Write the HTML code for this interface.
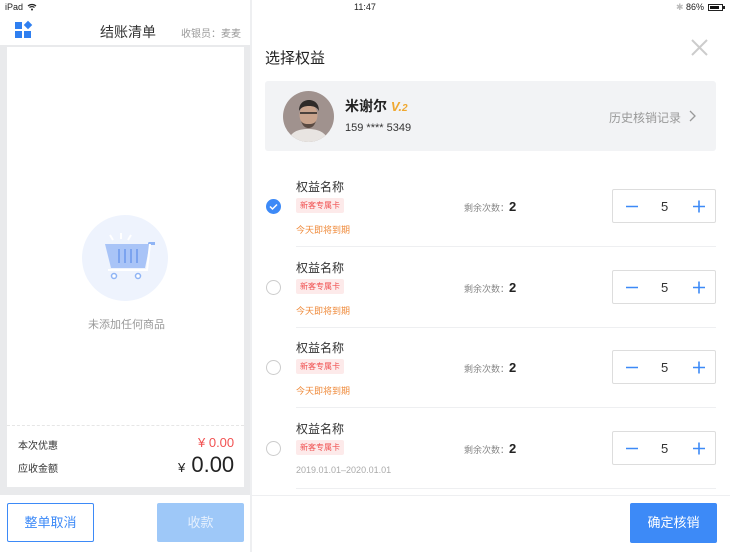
<!DOCTYPE html>
<html><head><meta charset="utf-8"><style>
*{margin:0;padding:0;box-sizing:border-box}
body{width:730px;height:552px;overflow:hidden;background:#fff;font-family:"Liberation Sans","Noto Sans CJK SC",sans-serif;position:relative;color:#333}
.a{position:absolute}
.status{top:0;left:0;width:730px;height:15px;background:#fff;font-size:9px;color:#222}
.left{top:15px;left:0;width:250px;height:537px;background:#fff}
.gray{top:45px;left:0;width:250px;height:450px;background:#e9eaec}
.card{top:47px;left:7px;width:237px;height:440px;background:#fff}
.sep{top:0;left:250px;width:2px;height:552px;background:#eeeff1}
.tag{font-size:8px;color:#f05050;background:#fdeaea;padding:2px 4px;border-radius:2px}
.step{width:104px;height:34px;border:1px solid #ddd;border-radius:2px;left:612px}
.step span{position:absolute;left:48px;top:9px;font-size:13px}
.step svg{position:absolute;left:0;top:0}
.radio{left:266px;width:15px;height:15px;border:1px solid #ccc;border-radius:50%}
.hr{left:296px;width:420px;height:1px;background:#eeeff1}
</style></head><body>
<div class="a status"><span class="a" style="left:5px;top:2px">iPad</span>
<svg class="a" style="left:27px;top:3px" width="10" height="8" viewBox="0 0 10 8"><path d="M1 3a6 6 0 0 1 8 0M2.5 4.5a4 4 0 0 1 5 0" stroke="#222" stroke-width="1.2" fill="none"/><circle cx="5" cy="6.5" r="1" fill="#222"/></svg>
<span class="a" style="left:354px;top:2px">11:47</span>
<span class="a" style="left:676px;top:2px;color:#bbb">✱</span>
<span class="a" style="left:686px;top:2px">86%</span>
<div class="a" style="left:708px;top:4px;width:15px;height:7px;border:1px solid #222;padding:1px"><div style="width:85%;height:100%;background:#111"></div></div>
<div class="a" style="left:723px;top:6px;width:2px;height:3px;background:#222"></div>
</div>
<div class="a left"></div>
<div class="a" style="left:15px;top:22px;width:7px;height:7px;background:#2f7ff0"></div>
<div class="a" style="left:15px;top:31px;width:7px;height:7px;background:#2f7ff0"></div>
<div class="a" style="left:24px;top:31px;width:7px;height:7px;background:#2f7ff0"></div>
<div class="a" style="left:25px;top:22px;width:6px;height:6px;background:#2f7ff0;transform:rotate(45deg)"></div>
<div class="a" style="left:100px;top:22px;font-size:14px;color:#333">结账清单</div>
<div class="a" style="left:181px;top:25px;font-size:10px;color:#999">收银员：麦麦</div>
<div class="a gray"></div>
<div class="a card"></div>
<svg class="a" style="left:7px;top:483px" width="237" height="8"><defs><pattern id="p" width="10" height="8" patternUnits="userSpaceOnUse"><circle cx="5" cy="8" r="4" fill="#e9eaec"/></pattern></defs><rect width="237" height="8" fill="url(#p)"/></svg>
<div class="a" style="left:82px;top:215px;width:86px;height:86px;border-radius:50%;background:#eef3fd"></div>
<svg class="a" style="left:95px;top:230px" width="60" height="55" viewBox="0 0 60 55"><path d="M15 5l3 5M26 3v6M36 5l-3 5" stroke="#fff" stroke-width="2"/><rect x="53" y="12" width="8" height="3" rx="1.5" fill="#8fb4f5"/><path d="M10 14h45l-5 24H16z" fill="#a9c4f7"/><path d="M24 19v14M30 19v14M36 19v14M42 19v14" stroke="#7ba3ef" stroke-width="2"/><path d="M55 14l-3 26H13" stroke="#fff" stroke-width="2" fill="none"/><circle cx="19" cy="46" r="2.5" stroke="#8fb4f5" stroke-width="1.5" fill="#fff"/><circle cx="43" cy="46" r="2.5" stroke="#8fb4f5" stroke-width="1.5" fill="#fff"/></svg>
<div class="a" style="left:88px;top:316px;font-size:11px;color:#999">未添加任何商品</div>
<div class="a" style="left:7px;top:425px;width:237px;border-top:1px dashed #e6e6e6"></div>
<div class="a" style="left:18px;top:437px;font-size:10px;color:#333">本次优惠</div>
<div class="a" style="left:198px;top:435px;font-size:13px;color:#f25252">¥ 0.00</div>
<div class="a" style="left:18px;top:460px;font-size:10px;color:#333">应收金额</div>
<div class="a" style="left:178px;top:452px;font-size:22px;color:#222"><span style="font-size:13px">¥</span> 0.00</div>
<div class="a" style="left:7px;top:503px;width:87px;height:39px;border:1px solid #3d8af7;border-radius:2px;color:#3d8af7;font-size:13px;text-align:center;line-height:37px">整单取消</div>
<div class="a" style="left:157px;top:503px;width:87px;height:39px;background:#9ec8f8;border-radius:2px;color:#e6f0fd;font-size:13px;text-align:center;line-height:39px">收款</div>
<div class="a sep"></div>
<div class="a" style="left:265px;top:47px;font-size:15px;color:#222">选择权益</div>
<svg class="a" style="left:691px;top:39px" width="17" height="17"><path d="M1 1l15 15M16 1L1 16" stroke="#ccc" stroke-width="2"/></svg>
<div class="a" style="left:265px;top:81px;width:451px;height:70px;background:#f2f3f5;border-radius:3px"></div>
<svg class="a" style="left:283px;top:91px" width="51" height="51" viewBox="0 0 51 51"><defs><clipPath id="c"><circle cx="25.5" cy="25.5" r="25.5"/></clipPath></defs><g clip-path="url(#c)"><rect width="51" height="51" fill="#a0928e"/><path d="M5 51c2-10 10-13 20-13s18 3 21 13z" fill="#e8e4e1"/><ellipse cx="25.5" cy="24" rx="9" ry="11" fill="#c9a48d"/><path d="M16 20c0-8 5-11 10-11s10 3 10 11c-2-4-6-5-10-5s-8 1-10 5z" fill="#2e2a28"/><path d="M18 30c2 6 5 7 7.5 7s5.5-1 7.5-7c-2 3-5 3-7.5 3s-5.5 0-7.5-3z" fill="#5a4a42"/><path d="M17 22h17" stroke="#222" stroke-width="1.5"/></g></svg>
<div class="a" style="left:345px;top:96px;font-size:14px;color:#222;font-weight:bold">米谢尔 <i style="color:#f0a830;font-size:13px">V.<span style="font-size:10px">2</span></i></div>
<div class="a" style="left:345px;top:122px;font-size:11px;color:#333">159 **** 5349</div>
<div class="a" style="left:609px;top:109px;font-size:12px;color:#999">历史核销记录</div>
<svg class="a" style="left:689px;top:110px" width="8" height="12"><path d="M1 1l5 5-5 5" stroke="#999" stroke-width="1.3" fill="none"/></svg>

<div class="a" style="left:296px;top:178px;font-size:12px">权益名称</div>
<div class="a tag" style="left:296px;top:198px">新客专属卡</div>
<div class="a" style="left:296px;top:223px;font-size:9px;color:#ef8a3a">今天即将到期</div>
<div class="a" style="left:266px;top:199px;width:15px;height:15px;border-radius:50%;background:#3d8af7"></div>
<svg class="a" style="left:266px;top:199px" width="15" height="15"><path d="M4 7.5l2.5 2.5L11 5.5" stroke="#fff" stroke-width="1.5" fill="none"/></svg>
<div class="a" style="left:464px;top:199px;font-size:9px;color:#888">剩余次数：<b style="font-size:13px;color:#222">2</b></div>
<div class="a step" style="top:189px"><svg width="104" height="34"><path d="M13 16.5h12M80 16.5h12M86 10.5v12" stroke="#3d8af7" stroke-width="1.6"/></svg><span>5</span></div>
<div class="a hr" style="top:246px"></div>

<div class="a" style="left:296px;top:259px;font-size:12px">权益名称</div>
<div class="a tag" style="left:296px;top:279px">新客专属卡</div>
<div class="a" style="left:296px;top:304px;font-size:9px;color:#ef8a3a">今天即将到期</div>
<div class="a radio" style="top:280px"></div>
<div class="a" style="left:464px;top:280px;font-size:9px;color:#888">剩余次数：<b style="font-size:13px;color:#222">2</b></div>
<div class="a step" style="top:270px"><svg width="104" height="34"><path d="M13 16.5h12M80 16.5h12M86 10.5v12" stroke="#3d8af7" stroke-width="1.6"/></svg><span>5</span></div>
<div class="a hr" style="top:327px"></div>

<div class="a" style="left:296px;top:339px;font-size:12px">权益名称</div>
<div class="a tag" style="left:296px;top:359px">新客专属卡</div>
<div class="a" style="left:296px;top:384px;font-size:9px;color:#ef8a3a">今天即将到期</div>
<div class="a radio" style="top:360px"></div>
<div class="a" style="left:464px;top:360px;font-size:9px;color:#888">剩余次数：<b style="font-size:13px;color:#222">2</b></div>
<div class="a step" style="top:350px"><svg width="104" height="34"><path d="M13 16.5h12M80 16.5h12M86 10.5v12" stroke="#3d8af7" stroke-width="1.6"/></svg><span>5</span></div>
<div class="a hr" style="top:407px"></div>

<div class="a" style="left:296px;top:420px;font-size:12px">权益名称</div>
<div class="a tag" style="left:296px;top:440px">新客专属卡</div>
<div class="a" style="left:296px;top:465px;font-size:9px;color:#aaa">2019.01.01–2020.01.01</div>
<div class="a radio" style="top:441px"></div>
<div class="a" style="left:464px;top:441px;font-size:9px;color:#888">剩余次数：<b style="font-size:13px;color:#222">2</b></div>
<div class="a step" style="top:431px"><svg width="104" height="34"><path d="M13 16.5h12M80 16.5h12M86 10.5v12" stroke="#3d8af7" stroke-width="1.6"/></svg><span>5</span></div>
<div class="a hr" style="top:488px"></div>

<div class="a" style="left:252px;top:495px;width:478px;height:1px;background:#eeeff1"></div>
<div class="a" style="left:630px;top:503px;width:87px;height:40px;background:#3d8af7;border-radius:2px;color:#fff;font-size:13px;text-align:center;line-height:40px">确定核销</div>
</body></html>
